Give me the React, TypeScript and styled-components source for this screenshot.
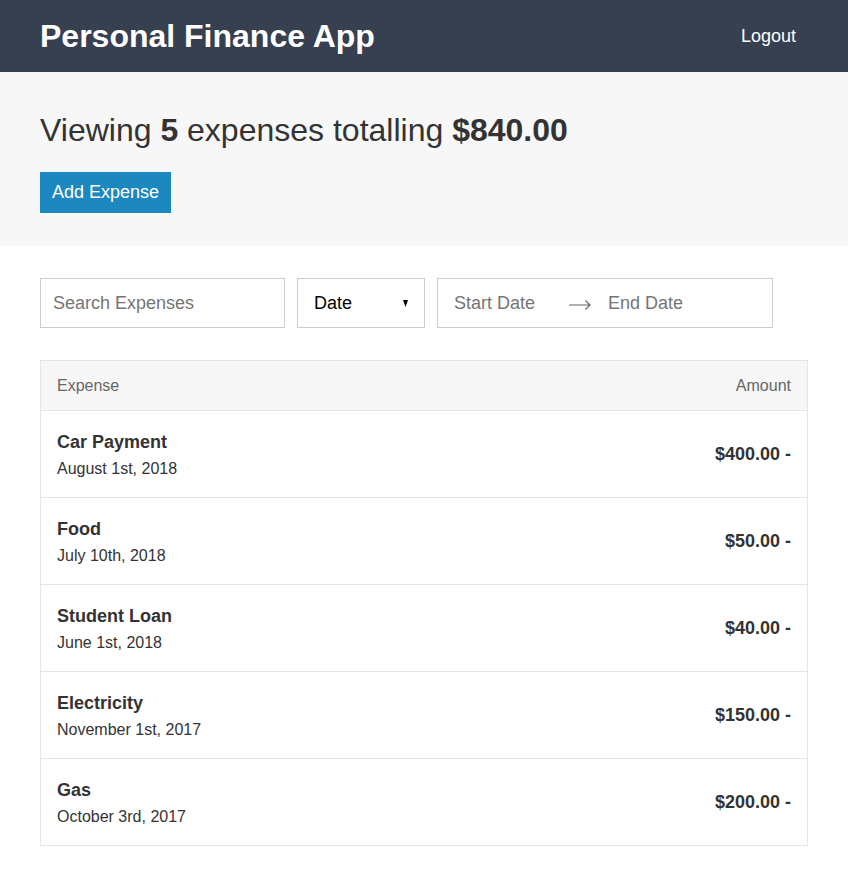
import React from "react";
import styled, { createGlobalStyle } from "styled-components";

const GlobalStyle = createGlobalStyle`
  * { box-sizing: border-box; }
  html, body { margin: 0; padding: 0; }
  body {
    font-family: "Liberation Sans", Arial, sans-serif;
    color: #333333;
    background: #ffffff;
  }
  input::placeholder { color: #757575; opacity: 1; }
`;

const Header = styled.header`
  background: #364051;
  height: 72px;
`;

const Container = styled.div`
  max-width: 848px;
  padding: 0 40px;
  margin: 0 auto;
`;

const HeaderInner = styled(Container)`
  height: 100%;
  display: flex;
  align-items: center;
  justify-content: space-between;
`;

const Title = styled.h1`
  margin: 0;
  font-size: 32px;
  font-weight: 700;
  color: #ffffff;
  line-height: 37px;
`;

const LogoutButton = styled.button`
  background: none;
  border: none;
  padding: 0 12px 0 0;
  font-family: inherit;
  font-size: 18px;
  color: #ffffff;
  cursor: pointer;
  line-height: 21px;
`;

const Summary = styled.section`
  background: #f7f7f7;
  padding: 40px 0 33px;
`;

const SummaryTitle = styled.h2`
  margin: 0 0 23px;
  font-size: 32px;
  font-weight: 400;
  line-height: 37px;
  color: #333333;
  strong { font-weight: 700; }
`;

const PrimaryButton = styled.button`
  background: #1c88bf;
  border: none;
  color: #ffffff;
  font-family: inherit;
  font-size: 18px;
  line-height: 21px;
  padding: 10px 12px;
  cursor: pointer;
`;

const Filters = styled.div`
  display: flex;
  gap: 12px;
  margin-top: 32px;
`;

const TextInput = styled.input`
  width: 245px;
  height: 50px;
  border: 1px solid #cacccd;
  padding: 0 12px;
  font-family: inherit;
  font-size: 18px;
  color: #333;
  outline: none;
`;

const SelectBox = styled.label`
  width: 128px;
  height: 50px;
  border: 1px solid #cacccd;
  display: flex;
  align-items: center;
  padding: 0 16px;
  background: #fff;
`;

const Select = styled.select`
  appearance: none;
  -webkit-appearance: none;
  border: none;
  background: transparent;
  flex: 1;
  padding: 0;
  font-family: inherit;
  font-size: 18px;
  color: #000;
  outline: none;
`;

const DateRange = styled.div`
  width: 336px;
  height: 50px;
  border: 1px solid #cacccd;
  display: flex;
  align-items: center;
  padding: 0 16px;
`;

const DateInput = styled.input<{ $width?: number }>`
  width: ${(p) => (p.$width ? `${p.$width}px` : "auto")};
  flex: ${(p) => (p.$width ? "none" : "1")};
  min-width: 0;
  border: none;
  padding: 0;
  font-family: inherit;
  font-size: 18px;
  color: #333;
  outline: none;
`;

const ArrowIcon = styled.svg`
  flex: none;
  margin: 4px 17px 0 0;
`;

const Table = styled.div`
  margin-top: 32px;
  margin-bottom: 40px;
  border: 1px solid #e5e5e5;
`;

const TableHeader = styled.div`
  background: #f7f7f7;
  height: 50px;
  display: flex;
  align-items: center;
  justify-content: space-between;
  padding: 0 16px;
  font-size: 16px;
  color: #666666;
  border-bottom: 1px solid #e5e5e5;
`;

const Row = styled.div`
  display: flex;
  align-items: center;
  justify-content: space-between;
  padding: 21px 16px 19px;
  border-top: 1px solid #e5e5e5;
  &:nth-child(2) { border-top: none; }
`;

const ItemInfo = styled.div`
  display: flex;
  flex-direction: column;
  gap: 7px;
`;

const ItemTitle = styled.h3`
  margin: 0;
  font-size: 18px;
  line-height: 21px;
  font-weight: 700;
  color: #333333;
`;

const ItemDate = styled.span`
  font-size: 16px;
  line-height: 18px;
  color: #333333;
`;

const Amount = styled.h3`
  margin: 0 0 2px;
  font-size: 18px;
  line-height: 21px;
  font-weight: 700;
  color: #333333;
`;

const expenses = [
  { title: "Car Payment", date: "August 1st, 2018", amount: "$400.00" },
  { title: "Food", date: "July 10th, 2018", amount: "$50.00" },
  { title: "Student Loan", date: "June 1st, 2018", amount: "$40.00" },
  { title: "Electricity", date: "November 1st, 2017", amount: "$150.00" },
  { title: "Gas", date: "October 3rd, 2017", amount: "$200.00" },
];

export default function App() {
  return (
    <>
      <GlobalStyle />
      <Header>
        <HeaderInner>
          <Title>Personal Finance App</Title>
          <LogoutButton>Logout</LogoutButton>
        </HeaderInner>
      </Header>
      <Summary>
        <Container>
          <SummaryTitle>
            Viewing <strong>5</strong> expenses totalling <strong>$840.00</strong>
          </SummaryTitle>
          <PrimaryButton>Add Expense</PrimaryButton>
        </Container>
      </Summary>
      <Container>
        <Filters>
          <TextInput type="text" placeholder="Search Expenses" />
          <SelectBox>
            <Select defaultValue="date">
              <option value="date">Date</option>
              <option value="amount">Amount</option>
            </Select>
            <svg width="5" height="7" viewBox="0 0 5 7">
              <polygon points="0,0 5,0 2.5,7" fill="#000" />
            </svg>
          </SelectBox>
          <DateRange>
            <DateInput $width={113} placeholder="Start Date" />
            <ArrowIcon width="24" height="12" viewBox="0 0 24 12">
              <path d="M2 6 H23 M18.5 1.5 L23 6 L18.5 10.5" stroke="#666" strokeWidth="1.2" fill="none" />
            </ArrowIcon>
            <DateInput placeholder="End Date" />
          </DateRange>
        </Filters>
        <Table>
          <TableHeader>
            <span>Expense</span>
            <span>Amount</span>
          </TableHeader>
          {expenses.map((e) => (
            <Row key={e.title}>
              <ItemInfo>
                <ItemTitle>{e.title}</ItemTitle>
                <ItemDate>{e.date}</ItemDate>
              </ItemInfo>
              <Amount>{e.amount} -</Amount>
            </Row>
          ))}
        </Table>
      </Container>
    </>
  );
}
